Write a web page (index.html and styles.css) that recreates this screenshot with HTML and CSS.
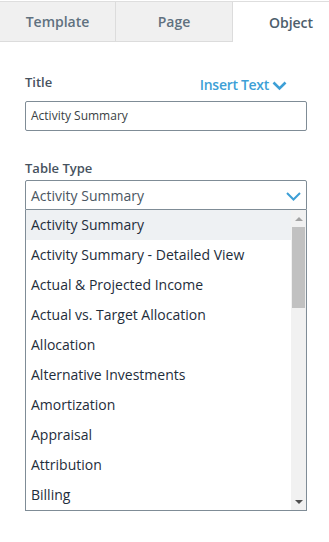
FILE: index.html
```html
<!DOCTYPE html>
<html>
<head>
<meta charset="utf-8">
<link rel="stylesheet" href="styles.css">
</head>
<body>
<div class="panel">
  <div class="tabs">
    <div class="tab">Template</div>
    <div class="tab">Page</div>
    <div class="tab active">Object</div>
  </div>
  <div class="form">
    <div class="title-row">
      <span class="label">Title</span>
      <span class="insert">Insert Text
        <svg class="insert-chev" width="15" height="10" viewBox="0 0 15 10"><path d="M1.5 1.5 L7.5 7.5 L13.5 1.5" fill="none" stroke="#3d9fd6" stroke-width="2.6"/></svg>
      </span>
    </div>
    <div class="input">Activity Summary</div>
    <div class="label table-label">Table Type</div>
    <div class="select">
      <span>Activity Summary</span>
      <svg width="15" height="9" viewBox="0 0 15 9"><path d="M1 1 L7.5 7.5 L14 1" fill="none" stroke="#3d9fd6" stroke-width="2"/></svg>
    </div>
    <div class="dropdown">
      <ul class="options">
        <li class="selected">Activity Summary</li>
        <li>Activity Summary - Detailed View</li>
        <li>Actual &amp; Projected Income</li>
        <li>Actual vs. Target Allocation</li>
        <li>Allocation</li>
        <li>Alternative Investments</li>
        <li>Amortization</li>
        <li>Appraisal</li>
        <li>Attribution</li>
        <li>Billing</li>
      </ul>
      <div class="scrollbar">
        <div class="arrow up"></div>
        <div class="track"><div class="thumb"></div></div>
        <div class="arrow down"></div>
      </div>
    </div>
  </div>
</div>
</body>
</html>
```
FILE: styles.css
```css
html, body {
  margin: 0;
  padding: 0;
  background: #ffffff;
  overflow: hidden;
}
body {
  font-family: "Open Sans", "Liberation Sans", sans-serif;
  width: 329px;
  height: 542px;
}
.panel {
  width: 329px;
  padding-top: 1px;
  overflow: hidden;
}
.tabs {
  display: grid;
  grid-template-columns: 116px 117px 116px;
  border-top: 1px solid #dedede;
  height: 40px;
  width: 329px;
  overflow: hidden;
}
.tab {
  display: flex;
  align-items: center;
  justify-content: center;
  background: #f0f0f0;
  border-right: 1px solid #dcdcdc;
  border-bottom: 1px solid #dcdcdc;
  font-size: 14px;
  font-weight: 600;
  color: #60717f;
  box-sizing: border-box;
}
.tab.active {
  background: #ffffff;
  border: none;
  color: #4d5e6c;
}
.form {
  width: 282px;
  padding-left: 25px;
}
.title-row {
  display: flex;
  justify-content: space-between;
  align-items: flex-end;
  margin-top: 30px;
  height: 20px;
}
.label {
  font-size: 13px;
  font-weight: 600;
  color: #46525e;
  line-height: 20px;
}
.insert {
  display: flex;
  align-items: center;
  gap: 3px;
  font-size: 14px;
  font-weight: 600;
  letter-spacing: -0.3px;
  color: #3d9fd6;
  line-height: 20px;
  margin-right: 20px;
  position: relative;
  top: 3px;
}
.insert-chev {
  margin-top: 1px;
}
.input {
  margin-top: 9px;
  height: 28px;
  border: 1px solid #7f8c96;
  border-radius: 2px;
  font-size: 12px;
  color: #3a3f44;
  line-height: 28px;
  padding-left: 5px;
}
.table-label {
  margin-top: 27px;
}
.select {
  margin-top: 2px;
  height: 28px;
  border: 1px solid #7f8c96;
  border-radius: 2px 2px 0 0;
  display: flex;
  align-items: center;
  justify-content: space-between;
  padding: 0 5px 0 5px;
  font-size: 14px;
  color: #4a5662;
}
.select svg {
  margin-top: 3px;
}
.dropdown {
  display: flex;
  border: 1px solid #7f8c96;
  border-top: none;
  height: 300px;
}
.options {
  list-style: none;
  margin: 0;
  padding: 0;
  flex: 1;
}
.options li {
  height: 30px;
  line-height: 30px;
  padding-left: 5px;
  font-size: 14px;
  color: #1e2d3b;
}
.options li.selected {
  background: #eef1f3;
}
.scrollbar {
  width: 15px;
  background: #f1f1f1;
  display: flex;
  flex-direction: column;
}
.arrow {
  height: 17px;
  display: flex;
  align-items: center;
  justify-content: center;
}
.arrow::before {
  content: "";
  width: 0;
  height: 0;
  border-left: 4px solid transparent;
  border-right: 4px solid transparent;
}
.arrow.up::before {
  border-bottom: 4px solid #a3a3a3;
}
.arrow.down::before {
  border-top: 4px solid #505050;
}
.track {
  flex: 1;
  padding: 0 1px;
}
.thumb {
  height: 81px;
  background: #c1c1c1;
}
```
